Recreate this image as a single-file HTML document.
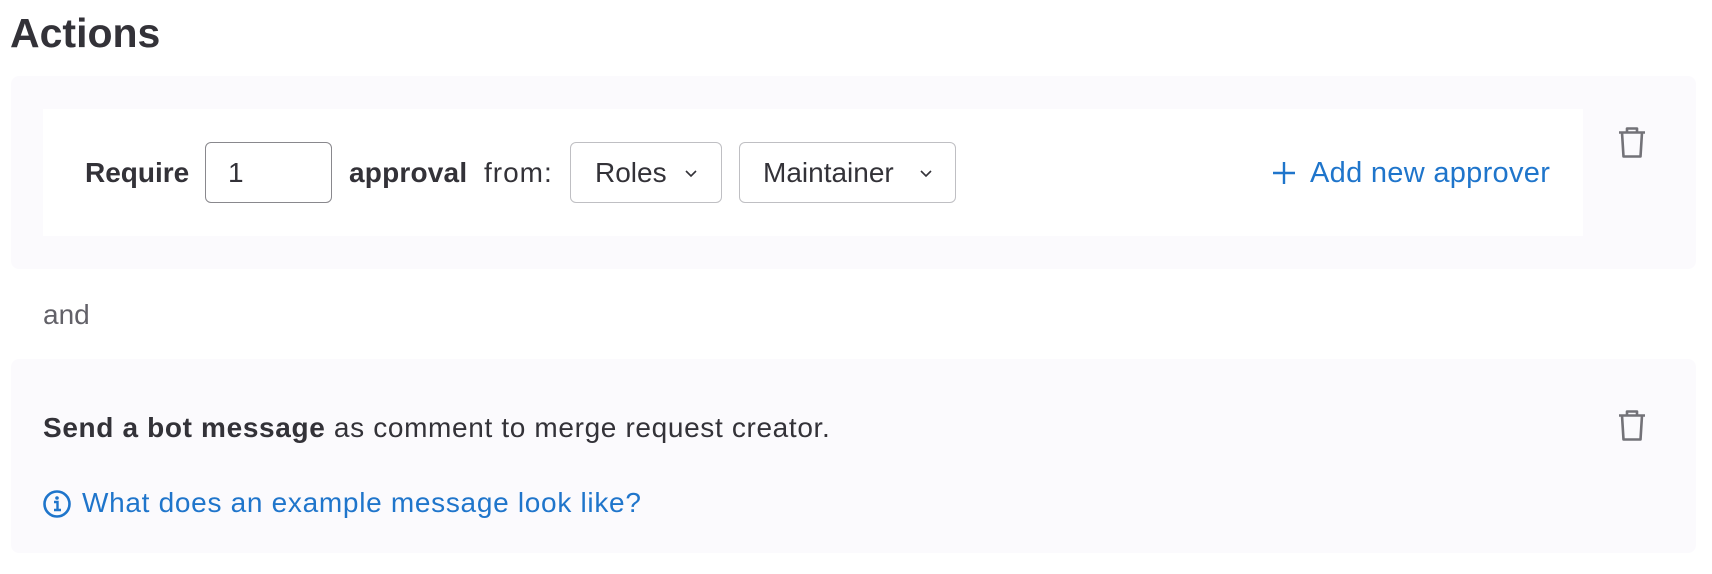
<!DOCTYPE html>
<html><head><meta charset="utf-8"><style>
html,body{margin:0;padding:0;background:#fff;width:1712px;height:574px;overflow:hidden}
body{font-family:"Liberation Sans",Arial,sans-serif;color:#333238;position:relative}
.a{position:absolute;white-space:nowrap}
.box{position:absolute;left:11px;width:1685px;background:#fbfafd;border-radius:8px}
.inner{position:absolute;left:43px;top:109px;width:1540px;height:127px;background:#fff}
.t{font-size:28px;line-height:34px}
.b{font-weight:bold}
.sel{position:absolute;top:142px;height:61px;box-sizing:border-box;border:1.5px solid #bfbfc3;border-radius:6px;background:#fff}
.blue{color:#1f75cb}
</style></head><body>
<div class="a b" style="left:10px;top:8px;font-size:41px;line-height:50px;color:#333238">Actions</div>

<div class="box" style="top:76px;height:193px"></div>
<div class="inner"></div>
<div class="a t b" style="left:85px;top:156px">Require</div>
<div class="sel" style="left:205px;width:127px;border-color:#89888d"></div>
<div class="a t" style="left:228px;top:156px">1</div>
<div class="a t b" style="left:349px;top:156px;letter-spacing:0.2px">approval</div>
<div class="a t" style="left:484px;top:156px;letter-spacing:1px">from:</div>
<div class="sel" style="left:570px;width:152px"></div>
<div class="a t" style="left:595px;top:156px">Roles</div>
<svg class="a" style="left:684px;top:166px" width="14" height="14" viewBox="0 0 14 14"><path d="M2 5l5 5 5-5" fill="none" stroke="#333238" stroke-width="1.6"/></svg>
<div class="sel" style="left:739px;width:217px"></div>
<div class="a t" style="left:763px;top:156px">Maintainer</div>
<svg class="a" style="left:919px;top:166px" width="14" height="14" viewBox="0 0 14 14"><path d="M2 5l5 5 5-5" fill="none" stroke="#333238" stroke-width="1.6"/></svg>
<svg class="a" style="left:1272px;top:161px" width="24" height="24" viewBox="0 0 24 24"><path d="M12 1v22M1 12h22" stroke="#1f75cb" stroke-width="2.4"/></svg>
<div class="a t blue" style="left:1310px;top:156px;font-size:29px;letter-spacing:0.3px">Add new approver</div>
<svg class="a" style="left:1617px;top:126px" width="30" height="33" viewBox="0 0 30 33"><path d="M2 6.5h26M10 6.5V2.5h10v4M5 6.5l1.5 24h17l1.5-24" fill="none" stroke="#737278" stroke-width="2.6" stroke-linejoin="round"/></svg>

<div class="a t" style="left:43px;top:298px;color:#626168">and</div>

<div class="box" style="top:359px;height:194px"></div>
<div class="a t" style="left:43px;top:411px;letter-spacing:0.65px"><span class="b">Send a bot message</span> as comment to merge request creator.</div>
<svg class="a" style="left:1617px;top:409px" width="30" height="33" viewBox="0 0 30 33"><path d="M2 6.5h26M10 6.5V2.5h10v4M5 6.5l1.5 24h17l1.5-24" fill="none" stroke="#737278" stroke-width="2.6" stroke-linejoin="round"/></svg>
<svg class="a" style="left:42px;top:489px" width="30" height="30" viewBox="0 0 30 30"><circle cx="15" cy="15" r="12.5" fill="none" stroke="#1f75cb" stroke-width="2.6"/><circle cx="15" cy="9" r="1.8" fill="#1f75cb"/><path d="M12 13h3.5v7M12 21h7" fill="none" stroke="#1f75cb" stroke-width="2.4"/></svg>
<div class="a t blue" style="left:82px;top:486px;letter-spacing:0.7px">What does an example message look like?</div>
</body></html>
